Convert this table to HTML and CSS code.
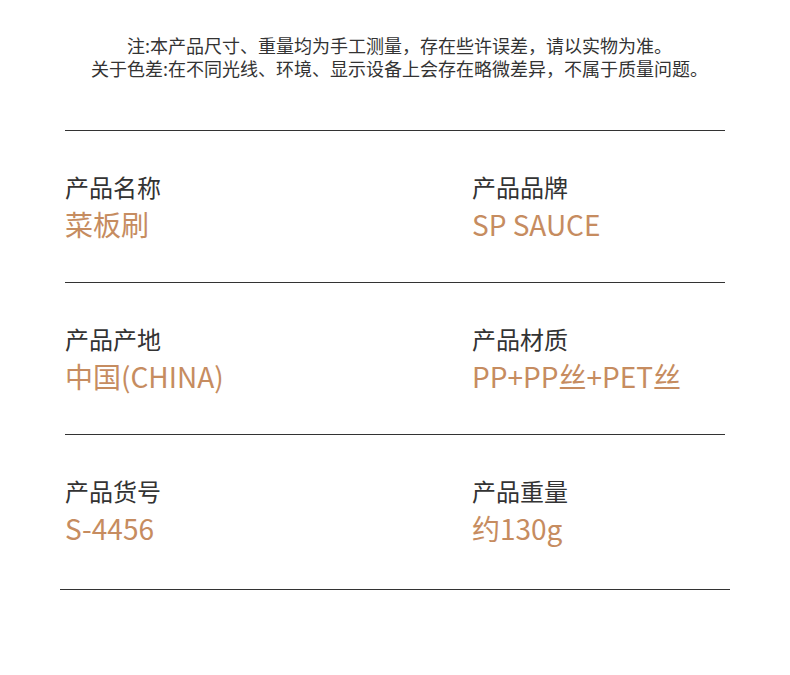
FILE: index.html
```html
<!DOCTYPE html>
<html lang="zh-CN">
<head>
<meta charset="utf-8">
<link rel="stylesheet" href="styles.css">
</head>
<body>
<div class="page">
  <div class="notes">
    <p>注:本产品尺寸、重量均为手工测量，存在些许误差，请以实物为准。</p>
    <p>关于色差:在不同光线、环境、显示设备上会存在略微差异，不属于质量问题。</p>
  </div>
  <div class="table">
    <div class="row">
      <div class="cell"><div class="label">产品名称</div><div class="value">菜板刷</div></div>
      <div class="cell"><div class="label">产品品牌</div><div class="value">SP SAUCE</div></div>
    </div>
    <div class="row">
      <div class="cell"><div class="label">产品产地</div><div class="value">中国(CHINA)</div></div>
      <div class="cell"><div class="label">产品材质</div><div class="value">PP+PP丝+PET丝</div></div>
    </div>
    <div class="row last">
      <div class="cell"><div class="label">产品货号</div><div class="value">S-4456</div></div>
      <div class="cell"><div class="label">产品重量</div><div class="value">约130g</div></div>
    </div>
  </div>
  <div class="endline"></div>
</div>
</body>
</html>
```
FILE: styles.css
```css
html, body {
  margin: 0;
  padding: 0;
  background: #ffffff;
}
body {
  font-family: "Noto Sans CJK SC", "Noto Sans", sans-serif;
  color: #333333;
}
.page {
  width: 790px;
}
.notes {
  padding: 34px 0 0 9px;
  text-align: center;
  font-size: 18px;
  line-height: 23px;
  color: #333333;
}
.notes p {
  margin: 0;
}
.table {
  margin: 50px 65px 0 65px;
}
.row {
  display: grid;
  grid-template-columns: 407px 1fr;
  border-top: 1px solid #333333;
  padding: 38px 0 39px 0;
}
.row.last {
  padding-bottom: 42px;
}
.label {
  font-size: 24px;
  line-height: 36px;
  color: #333333;
}
.value {
  font-size: 28px;
  line-height: 38px;
  color: #c68c60;
}
.endline {
  margin: 0 60px;
  border-top: 1px solid #333333;
}
```
